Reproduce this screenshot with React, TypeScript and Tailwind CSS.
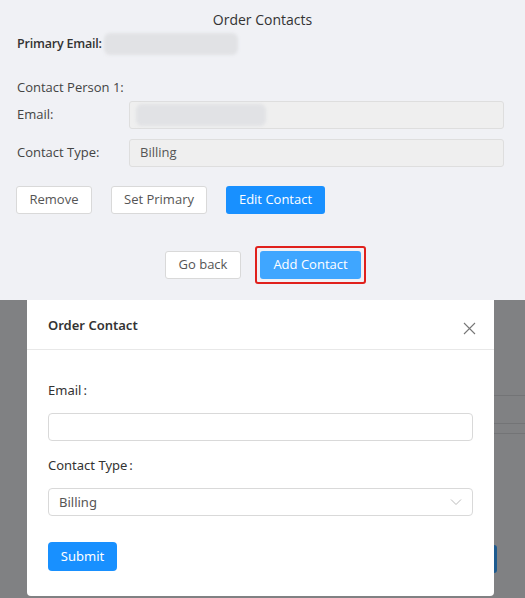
import React from "react";

const top = { fontFamily: '"Open Sans", "Noto Sans", sans-serif' };
const modalFont = { fontFamily: '"Noto Sans", "Noto Sans CJK SC", sans-serif' };

function Blur({ w }: { w: number }) {
  return (
    <div className="h-[22px] rounded-[6px] bg-[#e1e2e5] blur-[1.5px]" style={{ width: w }} />
  );
}

export default function App() {
  return (
    <div className="w-[525px] h-[598px] overflow-hidden">
      {/* Top page */}
      <div className="h-[300px] bg-[#f0f1f5] text-[13px] text-[#444]" style={top}>
        <div className="pt-[10px] text-center text-[14px] leading-[20px] text-[#333]">Order Contacts</div>
        <div className="px-[17px]">
          <div className="mt-[2px] flex h-[24px] items-center">
            <span className="text-[12.5px] font-semibold tracking-[-0.2px] text-[#333]">Primary Email:</span>
            <div className="ml-[2px]"><Blur w={134} /></div>
          </div>
          <div className="mt-[21px] h-[20px] leading-[20px]">Contact Person 1:</div>
          <div className="mt-[4px] mr-[4px] flex items-center">
            <div className="w-[112px]">Email:</div>
            <div className="flex h-[28px] flex-1 items-center rounded-[3px] border border-[#dedede] bg-[#efefef] px-[6px]">
              <Blur w={130} />
            </div>
          </div>
          <div className="mt-[10px] mr-[4px] flex items-center">
            <div className="w-[112px]">Contact Type:</div>
            <div className="flex h-[28px] flex-1 items-center rounded-[3px] border border-[#dedede] bg-[#efefef] px-[10px] text-[#555]">
              Billing
            </div>
          </div>
          <div className="mt-[19px] -ml-[1px] flex gap-[19px]">
            <button className="h-[28px] w-[76px] rounded-[3px] border border-[#d9d9d9] bg-white text-[#555]">Remove</button>
            <button className="h-[28px] w-[96px] rounded-[3px] border border-[#d9d9d9] bg-white text-[#555]">Set Primary</button>
            <button className="h-[28px] w-[99px] rounded-[3px] bg-[#1890ff] text-white">Edit Contact</button>
          </div>
        </div>
        <div className="mt-[32px] flex items-center pl-[165px]">
          <button className="h-[28px] w-[76px] rounded-[3px] border border-[#d9d9d9] bg-white text-[#555]">Go back</button>
          <div className="ml-[14px] rounded-[3px] border-2 border-[#e0201c] p-[3px]">
            <button className="block h-[28px] w-[101px] rounded-[3px] bg-[#3fa6ff] text-white">Add Contact</button>
          </div>
        </div>
      </div>

      {/* Overlay + modal */}
      <div className="flex h-[298px] bg-[#808183]">
        <div className="w-[27px]" />
        <div className="h-[296px] w-[467px] rounded-b-[4px] bg-white text-[13px] text-[#333]" style={modalFont}>
          <div className="flex h-[50px] items-center justify-between border-b border-[#e8e8e8] pl-[21px] pr-[18px]">
            <span className="mt-[2px] font-semibold text-[#333]">Order Contact</span>
            <svg width="13" height="13" viewBox="0 0 13 13" className="mt-[8px]">
              <path d="M1 1 L12 12 M12 1 L1 12" stroke="#777" strokeWidth="1.1" fill="none" />
            </svg>
          </div>
          <div className="px-[21px] pt-[30px]">
            <div className="h-[20px] leading-[20px]">Email<span className="ml-[2px]">:</span></div>
            <div className="mt-[13px] h-[28px] rounded-[4px] border border-[#d9d9d9] bg-white" />
            <div className="mt-[14px] h-[20px] leading-[20px]">Contact Type<span className="ml-[2px]">:</span></div>
            <div className="mt-[13px] flex h-[28px] items-center justify-between rounded-[4px] border border-[#d9d9d9] bg-white pl-[10px] pr-[10px] text-[#555]">
              <span className="mt-[2px]">Billing</span>
              <svg width="12" height="8" viewBox="0 0 12 8">
                <path d="M1 1.5 L6 6.5 L11 1.5" stroke="#bbb" strokeWidth="1" fill="none" />
              </svg>
            </div>
            <button className="mt-[26px] h-[29px] w-[69px] rounded-[4px] bg-[#1890ff] text-white">Submit</button>
          </div>
        </div>
        <div className="flex flex-1 flex-col">
          <div className="mt-[95px] h-px bg-[#737476]" />
          <div className="mt-[27px] h-px bg-[#737476]" />
          <div className="mt-[9px] h-px bg-[#737476]" />
          <div className="mt-[111px] h-[28px] w-[3px] rounded-r-[3px] bg-[#1d5b8f]" />
        </div>
      </div>
    </div>
  );
}
